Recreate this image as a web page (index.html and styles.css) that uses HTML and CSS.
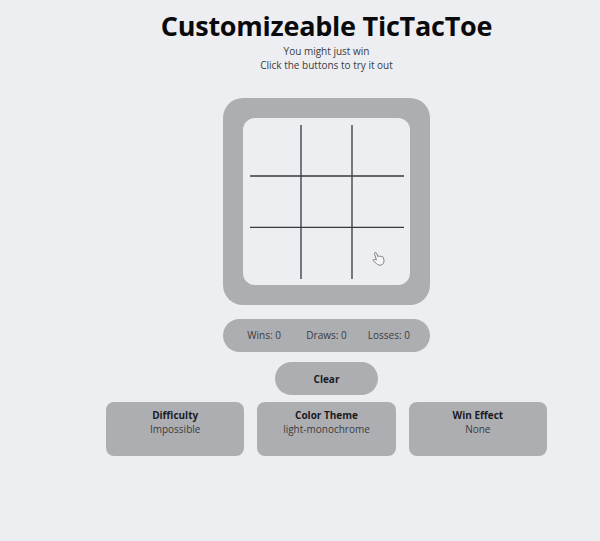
FILE: index.html
```html
<!DOCTYPE html>
<html lang="en">
<head>
<meta charset="utf-8">
<title>Customizeable TicTacToe</title>
<link rel="stylesheet" href="styles.css">
</head>
<body>
<main class="page">
  <header class="intro">
    <h1>Customizeable TicTacToe</h1>
    <p>You might just win</p>
    <p>Click the buttons to try it out</p>
  </header>
  <section class="board">
    <div class="field">
      <svg class="grid" viewBox="0 0 154 154"><path d="M51 0V154M102 0V154M0 51H154M0 102.300H154"/></svg>
      <svg class="cursor" viewBox="0 0 14 17"><path d="M4.800 10L2.700 3.500a1.100 1.100 0 0 1 2.100-.8L6.300 6.500c.2-1 1.900-1.100 2.200 0 .4-.9 1.900-.7 2 .4.600-.7 1.800-.2 1.900.8l.5 3c.2 2.200-.8 4.200-3 4.800-1.900.5-3.800 0-4.900-1.400L1.300 11c-.7-1 .5-2 1.500-1.500z"/></svg>
    </div>
  </section>
  <section class="scores"><span>Wins: 0</span><span>Draws: 0</span><span>Losses: 0</span></section>
  <button class="clear">Clear</button>
  <section class="options">
    <div class="option"><b>Difficulty</b><span>Impossible</span></div>
    <div class="option"><b>Color Theme</b><span>light-monochrome</span></div>
    <div class="option"><b>Win Effect</b><span>None</span></div>
  </section>
</main>
</body>
</html>
```
FILE: styles.css
```css
* { box-sizing: border-box; }
body {
  margin: 0;
  min-height: 541px;
  background: #edeef2;
  color: #3b3b40;
  font: 10px/14px "Open Sans", sans-serif;
}
.page {
  width: 441px;
  margin-left: 106px;
  padding-top: 8px;
  display: flex;
  flex-direction: column;
  align-items: center;
}
.intro { text-align: center; }
h1 {
  margin: 0;
  font-size: 27px;
  letter-spacing: -0.25px;
  line-height: 36px;
  color: #0a0a0c;
  white-space: nowrap;
}
p { margin: 0; }
.board {
  width: 207px;
  height: 207px;
  margin-top: 26px;
  padding: 20px;
  border-radius: 20px;
  background: #adaeb2;
}
.field {
  position: relative;
  height: 167px;
  padding: 7px 6px 6px 7px;
  border-radius: 12px;
  background: #edeef2;
}
.grid {
  display: block;
  width: 154px;
  height: 154px;
  fill: none;
  stroke: #38393d;
  stroke-width: 1.3;
}
.cursor {
  position: absolute;
  left: 129px;
  top: 132px;
  width: 13px;
  height: 17px;
  fill: #f5f5f7;
  stroke: #77787c;
  stroke-width: 1;
}
.scores {
  width: 207px;
  height: 33px;
  margin-top: 14px;
  padding: 0 10px 2px;
  display: grid;
  grid-template-columns: repeat(3, 1fr);
  align-items: center;
  text-align: center;
  border-radius: 17px;
  background: #adaeb2;
}
.clear {
  width: 103px;
  height: 33px;
  margin-top: 10px;
  padding: 0;
  border: 0;
  border-radius: 17px;
  background: #adaeb2;
  color: #1b1b1e;
  font: bold 10px/14px "Open Sans", sans-serif;
}
.options {
  width: 100%;
  margin-top: 7px;
  display: grid;
  grid-template-columns: repeat(3, 1fr);
  gap: 13px;
}
.option {
  height: 54px;
  padding-top: 6px;
  display: flex;
  flex-direction: column;
  align-items: center;
  border-radius: 8px;
  background: #adaeb2;
}
.option b { color: #1b1b1e; }
```
